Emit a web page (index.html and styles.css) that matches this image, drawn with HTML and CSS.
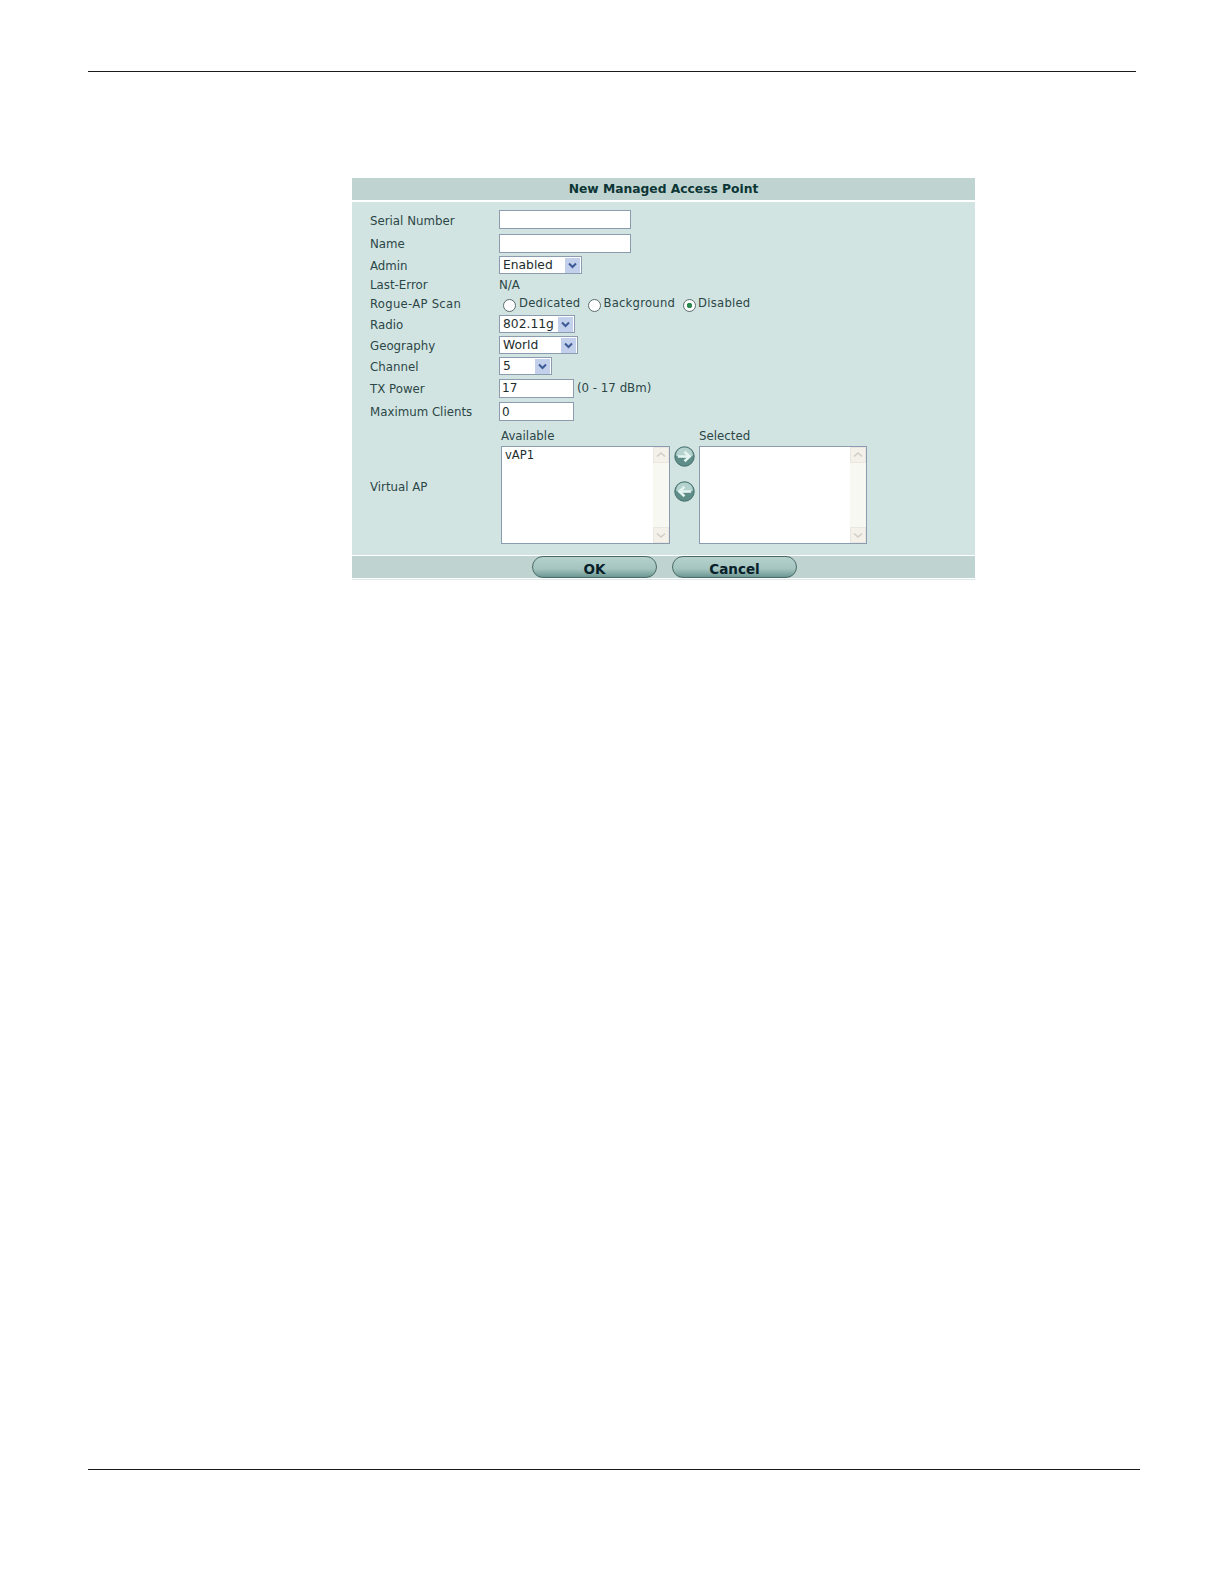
FILE: index.html
```html
<!DOCTYPE html>
<html lang="en">
<head>
    <meta charset="UTF-8">
    <title>New Managed Access Point</title>
    <link rel="stylesheet" href="styles.css">
</head>
<body>
    <div class="rule rule-top"></div>

    <div class="panel">
        <div class="panel-title">New Managed Access Point</div>

        <div class="form">
            <div class="label label-low">Serial Number</div>
            <div class="field"><input type="text" class="text-wide"></div>

            <div class="label label-low">Name</div>
            <div class="field"><input type="text" class="text-wide"></div>

            <div class="label label-low">Admin</div>
            <div class="field">
                <div class="select select-admin"><span>Enabled</span><svg class="drop" viewBox="0 0 15 15"><path d="M4 5.5 L7.5 9 L11 5.5" fill="none" stroke="#3c5a96" stroke-width="2"/></svg></div>
            </div>

            <div class="label">Last-Error</div>
            <div class="field">N/A</div>

            <div class="label wide-text">Rogue-AP Scan</div>
            <div class="field radios">
                <span class="radio"></span><span class="radio-text">Dedicated</span>
                <span class="radio radio-second"></span><span class="radio-text">Background</span>
                <span class="radio radio-third on"></span><span class="radio-text">Disabled</span>
            </div>

            <div class="label label-low">Radio</div>
            <div class="field">
                <div class="select select-radio"><span>802.11g</span><svg class="drop" viewBox="0 0 15 15"><path d="M4 5.5 L7.5 9 L11 5.5" fill="none" stroke="#3c5a96" stroke-width="2"/></svg></div>
            </div>

            <div class="label label-low">Geography</div>
            <div class="field">
                <div class="select select-geo"><span>World</span><svg class="drop" viewBox="0 0 15 15"><path d="M4 5.5 L7.5 9 L11 5.5" fill="none" stroke="#3c5a96" stroke-width="2"/></svg></div>
            </div>

            <div class="label label-low">Channel</div>
            <div class="field">
                <div class="select select-channel"><span>5</span><svg class="drop" viewBox="0 0 15 15"><path d="M4 5.5 L7.5 9 L11 5.5" fill="none" stroke="#3c5a96" stroke-width="2"/></svg></div>
            </div>

            <div class="label label-low">TX Power</div>
            <div class="field"><input type="text" class="text-short" value="17"><span class="hint">(0 - 17 dBm)</span></div>

            <div class="label">Maximum Clients</div>
            <div class="field"><input type="text" class="text-short" value="0"></div>

            <div class="label label-vap">Virtual AP</div>
            <div class="vap">
                <div class="vap-col">
                    <div class="vap-head">Available</div>
                    <div class="listbox">
                        <div class="list-items">vAP1</div>
                        <div class="scroll">
                            <div class="scroll-btn"><svg viewBox="0 0 14 14"><path d="M3 8.5 L7 5 L11 8.5" fill="none" stroke="#cfcfc6" stroke-width="1.6"/></svg></div>
                            <div class="scroll-btn"><svg viewBox="0 0 14 14"><path d="M3 5.5 L7 9 L11 5.5" fill="none" stroke="#cfcfc6" stroke-width="1.6"/></svg></div>
                        </div>
                    </div>
                </div>
                <div class="arrows">
                    <svg class="arrow" viewBox="0 0 22 22">
                        <circle cx="11" cy="11" r="10.2" fill="#5f8d88" stroke="#466f6c"/>
                        <path d="M2 10 A9 8.5 0 0 1 20 10 Q11 14 2 10Z" fill="#b4d3ce"/>
                        <path d="M4 11 H15 M11 6 L16.5 11 L11 16" fill="none" stroke="#e4f4f1" stroke-width="2.6"/>
                    </svg>
                    <svg class="arrow" viewBox="0 0 22 22">
                        <circle cx="11" cy="11" r="10.2" fill="#5f8d88" stroke="#466f6c"/>
                        <path d="M2 10 A9 8.5 0 0 1 20 10 Q11 14 2 10Z" fill="#b4d3ce"/>
                        <path d="M18 11 H7 M11 6 L5.5 11 L11 16" fill="none" stroke="#e4f4f1" stroke-width="2.6"/>
                    </svg>
                </div>
                <div class="vap-col">
                    <div class="vap-head">Selected</div>
                    <div class="listbox listbox-right">
                        <div class="list-items"></div>
                        <div class="scroll">
                            <div class="scroll-btn"><svg viewBox="0 0 14 14"><path d="M3 8.5 L7 5 L11 8.5" fill="none" stroke="#cfcfc6" stroke-width="1.6"/></svg></div>
                            <div class="scroll-btn"><svg viewBox="0 0 14 14"><path d="M3 5.5 L7 9 L11 5.5" fill="none" stroke="#cfcfc6" stroke-width="1.6"/></svg></div>
                        </div>
                    </div>
                </div>
            </div>
        </div>

        <div class="panel-foot">
            <button class="pill">OK</button>
            <button class="pill">Cancel</button>
        </div>
    </div>

    <div class="rule rule-bottom"></div>
</body>
</html>
```

FILE: styles.css
```css
* {
    margin: 0;
    padding: 0;
    box-sizing: border-box;
}

body {
    background: #ffffff;
    font-family: "DejaVu Sans", sans-serif;
    font-size: 11.8px;
    color: #2c4747;
    height: 1584px;
    overflow: hidden;
    padding-top: 71px;
}

.rule {
    height: 1px;
    background: #1a1a1a;
    margin-left: 88px;
}

.rule-top {
    width: 1048px;
}

.rule-bottom {
    width: 1052px;
    margin-top: 889px;
}

.panel {
    width: 623px;
    margin: 106px 0 0 352px;
    background: #d2e4e2;
    border-bottom: 1px solid #dde9e7;
}

.panel-title {
    height: 22px;
    line-height: 23px;
    background: #bfd4d0;
    text-align: center;
    font-size: 12.3px;
    font-weight: bold;
    color: #0c3535;
}

.form {
    display: grid;
    grid-template-columns: 129px 1fr;
    grid-template-rows: 23px 24px 20px 20px 18px 22px 20px 22px 22px 25px auto;
    border-top: 2px solid #ffffff;
    padding: 6px 0 11px 18px;
}

.label,
.field {
    display: flex;
    align-items: center;
    white-space: nowrap;
}

.label-low {
    padding-top: 2px;
}

.wide-text {
    font-size: 11.6px;
    letter-spacing: 0.3px;
}

input {
    height: 19px;
    border: 1px solid #8c9cb0;
    background: #ffffff;
    font-family: "DejaVu Sans", sans-serif;
    font-size: 12px;
    color: #1d2d2d;
    padding: 0 2px;
}

.text-wide {
    width: 132px;
}

.text-short {
    width: 75px;
}

.hint {
    margin-left: 3px;
}

.select {
    display: flex;
    align-items: center;
    justify-content: space-between;
    height: 18px;
    border: 1px solid #8c9cb0;
    background: #ffffff;
    padding: 0 1px 0 3px;
    color: #1d2d2d;
    font-size: 12.3px;
}

.select-admin {
    width: 83px;
}

.select-radio {
    width: 76px;
}

.select-geo {
    width: 79px;
}

.select-channel {
    width: 53px;
}

.drop {
    width: 15px;
    height: 15px;
    background: #c3d0ec;
}

.radios {
    font-size: 11.6px;
    letter-spacing: 0.25px;
    padding-left: 4px;
}

.radio-text {
    position: relative;
    top: -1px;
}

.radio {
    position: relative;
    top: 1px;
    width: 13px;
    height: 13px;
    border: 1px solid #5c6c6c;
    border-radius: 50%;
    background: #ffffff;
    margin-right: 3px;
    flex: none;
}

.radio-second {
    margin-left: 8px;
    margin-right: 2px;
}

.radio-third {
    margin-left: 8px;
    margin-right: 2px;
}

.on {
    background: radial-gradient(circle, #2d8a4e 0 2.5px, #ffffff 3px);
}

.label-vap {
    padding-top: 5px;
}

.vap {
    display: flex;
    padding: 3px 0 0 2px;
}

.vap-head {
    height: 19px;
    line-height: 18px;
}

.listbox {
    display: flex;
    width: 169px;
    height: 98px;
    border: 1px solid #8c9cb0;
    background: #ffffff;
}

.listbox-right {
    width: 168px;
}

.list-items {
    flex: 1;
    padding: 1px 3px;
    font-size: 11.6px;
    color: #1d2d2d;
}

.scroll {
    display: flex;
    flex-direction: column;
    justify-content: space-between;
    width: 16px;
    background: #f8f8f3;
}

.scroll-btn {
    height: 16px;
    background: #f3f1ea;
    border: 1px solid #e9e7df;
}

.scroll-btn svg {
    display: block;
    width: 14px;
    height: 14px;
}

.arrows {
    display: flex;
    flex-direction: column;
    width: 29px;
    padding: 19px 0 0 4px;
    gap: 14px;
}

.arrow {
    width: 21px;
    height: 21px;
}

.panel-foot {
    display: flex;
    justify-content: center;
    gap: 15px;
    height: 24px;
    background: #bfd4d0;
    border-top: 1px solid #ffffff;
    border-bottom: 1px solid #ffffff;
    padding-left: 2px;
}

.pill {
    width: 125px;
    height: 22px;
    border: 1px solid #4a6a68;
    border-radius: 11px;
    background: linear-gradient(#b5d2cd, #a4c4bf 60%, #6d9893);
    font-family: "DejaVu Sans", sans-serif;
    font-size: 13.5px;
    font-weight: bold;
    line-height: 24px;
    color: #07202a;
}
```
